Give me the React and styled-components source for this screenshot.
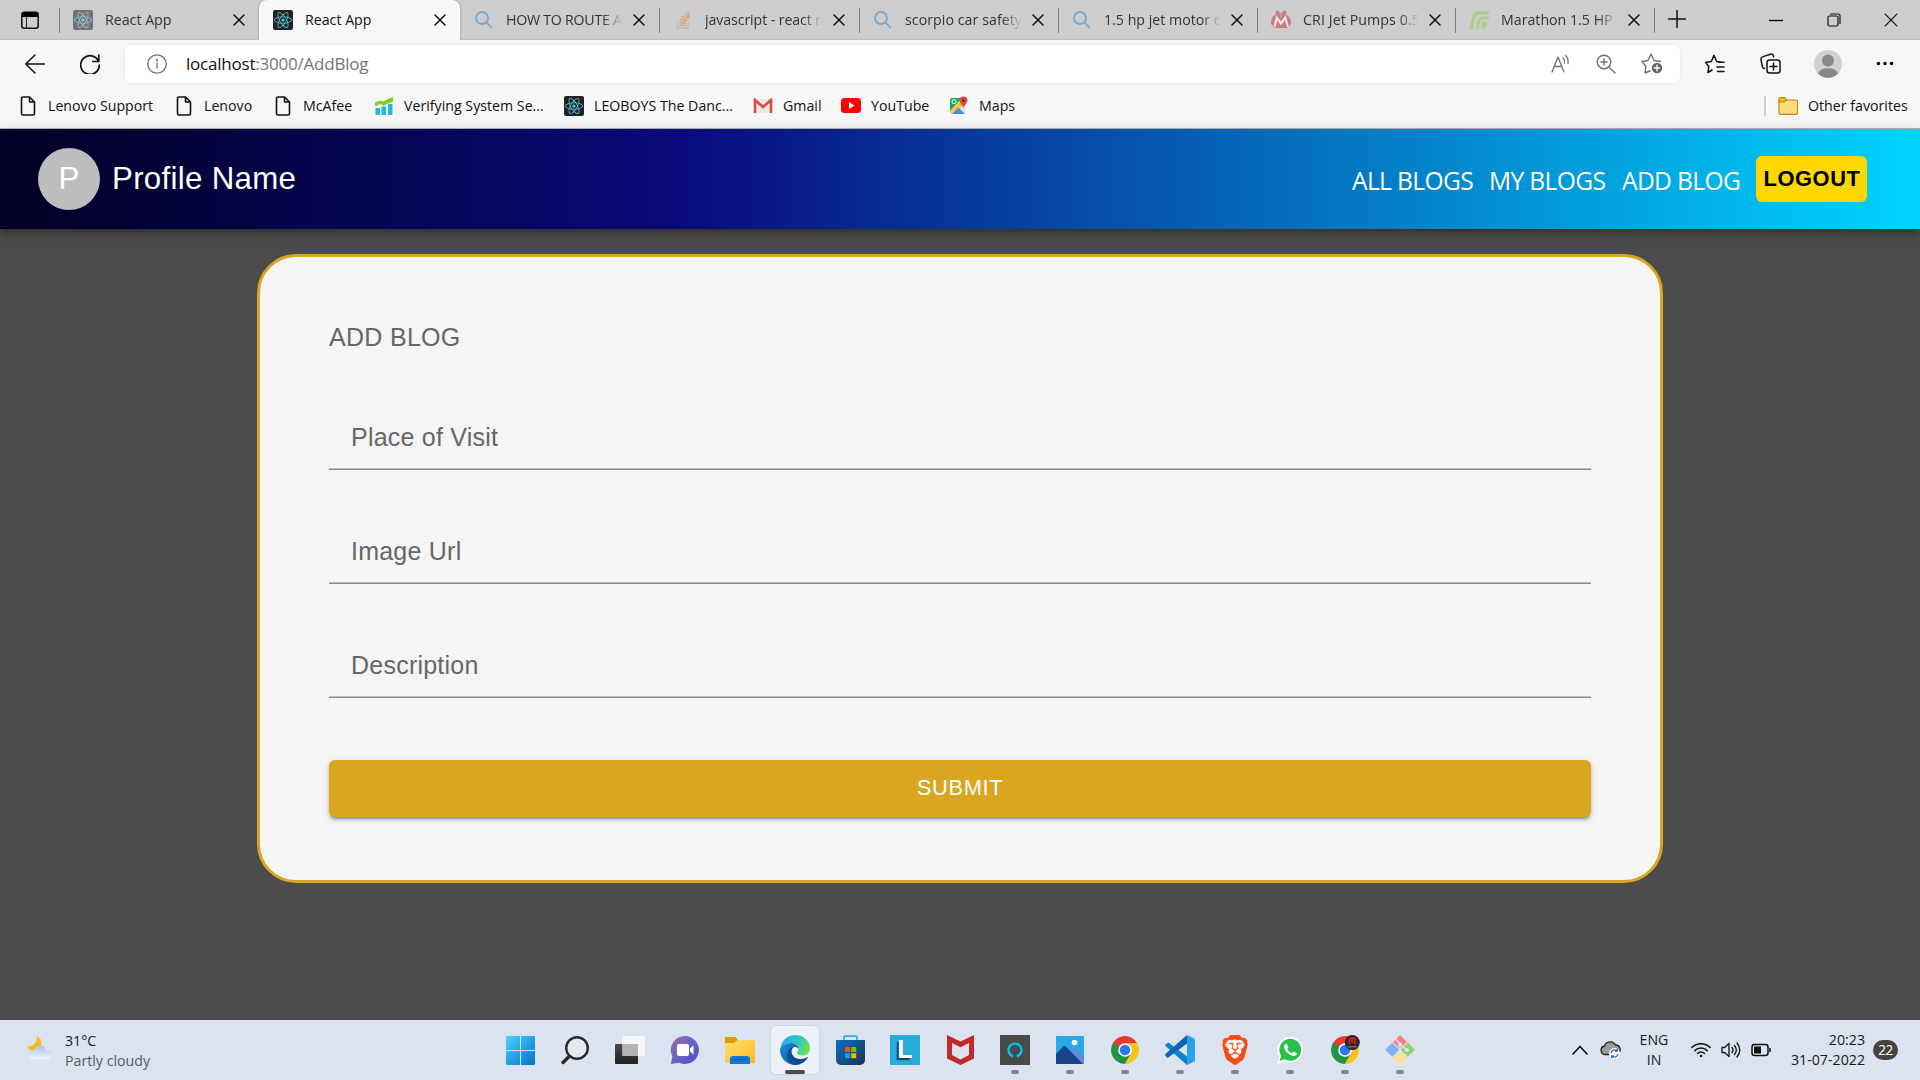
import React from "react";
import styled, { createGlobalStyle } from "styled-components";
import { FaReact } from "react-icons/fa";
import { SiBrave } from "react-icons/si";

const UI = `"Open Sans", "Noto Sans", sans-serif`;
const ARIAL = `"Liberation Sans", Arial, sans-serif`;

const Global = createGlobalStyle`
  * { box-sizing: border-box; }
  body { margin: 0; overflow: hidden; background: #4c4c4c; font-family: ${UI}; }
  svg { display: block; flex: none; }
`;

const Screen = styled.div`
  width: 1920px;
  height: 1080px;
  display: flex;
  flex-direction: column;
`;

/* ---------- browser chrome ---------- */
const TabStrip = styled.div`
  height: 40px;
  flex: none;
  display: flex;
  background: #cdcdcd;
  box-shadow: inset 0 -1px 0 #bdbdbd;
`;
const TabActions = styled.div`
  width: 59px;
  padding: 11px 0 0 21px;
`;
const Tab = styled.div`
  width: ${(p) => p.$w}px;
  height: 40px;
  display: flex;
  align-items: center;
  padding: 0 14px 0 14px;
  background: ${(p) => (p.$active ? "#f7f7f7" : "transparent")};
  border-radius: 8px 8px 0 0;
  box-shadow: ${(p) => (p.$active ? "0 0 3px rgba(0,0,0,.28)" : "none")};
`;
const Divider = styled.div`
  width: 1px;
  height: 25px;
  margin: 8px -1px 0 0;
  background: #7d7d7d;
`;
const Favicon = styled.div`
  width: 20px;
  height: 20px;
  margin-right: 12px;
  display: flex;
  align-items: center;
  opacity: ${(p) => (p.$dim ? 0.52 : 1)};
`;
const TabTitle = styled.div`
  flex: 1;
  min-width: 0;
  white-space: nowrap;
  font-size: 14.2px;
  letter-spacing: ${(p) => p.$ls || 0}px;
  line-height: 20px;
  color: ${(p) => (p.$active ? "#111" : "#333")};
  ${(p) => p.$fade && "mask-image: linear-gradient(90deg, #000 82%, transparent 99%);"}
  margin-right: 9px;
`;
const ReactTile = styled.div`
  width: 20px;
  height: 20px;
  border-radius: 2px;
  background: #222;
  color: #58c4dc;
  display: flex;
  align-items: center;
  justify-content: center;
  font-size: 18px;
`;
const NewTab = styled.div`
  padding: 10px 0 0 14px;
  flex: 1;
`;
const WindowButtons = styled.div`
  display: flex;
  align-items: center;
  gap: 43.5px;
  padding-right: 22px;
`;
const Toolbar = styled.div`
  height: 47px;
  flex: none;
  display: flex;
  align-items: center;
  background: #f7f7f7;
  padding-left: 25px;
`;
const ToolButton = styled.div`
  width: ${(p) => p.$w || 20}px;
  margin-right: ${(p) => p.$mr || 0}px;
  display: flex;
  align-items: center;
  justify-content: center;
`;
const AddressBar = styled.div`
  width: 1555px;
  height: 38px;
  display: flex;
  align-items: center;
  padding: 0 17px 0 22px;
  background: #fff;
  border-radius: 6px;
  box-shadow: 0 0 4px rgba(0, 0, 0, 0.08);
`;
const Url = styled.div`
  flex: 1;
  margin-left: 19px;
  font-size: 17px;
  letter-spacing: -0.22px;
  color: #757575;
  b { font-weight: 400; color: #111; }
`;
const Bookmarks = styled.div`
  height: 42px;
  flex: none;
  display: flex;
  align-items: center;
  background: #f7f7f7;
  border-bottom: 1px solid #b5b5b5;
  padding: 0 14px 4px 18px;
`;
const Bookmark = styled.div`
  width: ${(p) => p.$w}px;
  display: flex;
  align-items: center;
  white-space: nowrap;
  font-size: 14.2px;
  color: #111;
`;
const BookmarkIcon = styled.div`
  width: 20px;
  margin-right: 10px;
  display: flex;
  justify-content: center;
`;
const BookmarkRule = styled.div`
  width: 2px;
  height: 20px;
  margin: 0 12px 0 auto;
  background: #d0d0d0;
`;

/* ---------- page ---------- */
const Header = styled.header`
  height: 100px;
  flex: none;
  display: flex;
  align-items: center;
  justify-content: space-between;
  padding: 0 53px 0 38px;
  background: linear-gradient(90deg, rgb(2, 0, 36) 0%, rgb(9, 9, 121) 35%, rgb(0, 212, 255) 100%);
  box-shadow: 0 3px 6px -1.5px rgba(0, 0, 0, 0.2), 0 6px 8px rgba(0, 0, 0, 0.14), 0 1.5px 16px rgba(0, 0, 0, 0.12);
  position: relative;
`;
const Profile = styled.div`
  display: flex;
  align-items: center;
  color: #fff;
  font: 31.25px/50px ${ARIAL};
`;
const Avatar = styled.div`
  width: 62px;
  height: 62px;
  border-radius: 50%;
  background: #bdbdbd;
  display: flex;
  align-items: center;
  justify-content: center;
  line-height: 1;
`;
const ProfileName = styled.div`
  margin-left: 12px;
  letter-spacing: 0.3px;
`;
const Nav = styled.nav`
  display: flex;
  align-items: center;
  color: #fff;
  font-size: 24.6px;
`;
const NavLink = styled.div`
  width: ${(p) => p.$w}px;
  letter-spacing: -0.65px;
  white-space: nowrap;
  line-height: 34px;
  padding-top: 3px;
`;
const Logout = styled.button`
  width: 111px;
  height: 46px;
  border: 0;
  border-radius: 6px;
  background: #ffd700;
  color: #000;
  font: bold 21.875px/38px ${ARIAL};
  letter-spacing: 0.55px;
  padding: 0 0 1px 1px;
`;
const Main = styled.main`
  flex: 1;
  background: #4c4c4c;
  padding-top: 25px;
  display: flex;
  justify-content: center;
  align-items: flex-start;
`;
const Card = styled.section`
  width: 1406px;
  height: 629px;
  border: 3px solid #daa520;
  border-radius: 39px;
  background: #f5f5f5;
  padding: 61px 69px 0;
  font-family: ${ARIAL};
`;
const Title = styled.div`
  font-size: 25px;
  line-height: 38px;
  letter-spacing: 0.3px;
  color: #666;
  margin-bottom: 38px;
`;
const Field = styled.div`
  height: 76px;
  margin-bottom: 38px;
  padding: 25px 0 0 22px;
  border-bottom: 1px solid #8a8a8a;
  box-shadow: inset 0 -1px 0 #bbb;
  font-size: 25px;
  line-height: 36px;
  letter-spacing: 0.23px;
  color: #666;
`;
const Submit = styled.button`
  display: block;
  width: 1262px;
  height: 57px;
  margin-top: 62px;
  border: 0;
  border-radius: 6px;
  background: #daa520;
  color: #fff;
  font: 21.875px ${ARIAL};
  letter-spacing: 0.62px;
  padding: 0 6px 1px;
  box-shadow: 0 4px 2px -3px rgba(0, 0, 0, 0.25), 0 3px 3px rgba(0, 0, 0, 0.2), 0 2px 8px rgba(0, 0, 0, 0.12);
`;

/* ---------- taskbar ---------- */
const Taskbar = styled.footer`
  height: 60px;
  flex: none;
  display: flex;
  justify-content: space-between;
  background: #dae3ef;
  color: #1b1b1b;
  font-size: 14.2px;
  line-height: 20px;
`;
const Weather = styled.div`
  width: 493px;
  display: flex;
  align-items: center;
  gap: 12px;
  padding: 1px 0 0 26px;
  svg { margin-bottom: 6px; }
`;
const Small = styled.div`
  color: ${(p) => (p.$muted ? "#555b62" : "#1b1b1b")};
  text-align: ${(p) => p.$align || "left"};
  white-space: nowrap;
`;
const Apps = styled.div`
  display: flex;
  gap: 7px;
  padding: 6px 0 0 3px;
`;
const TaskButton = styled.div`
  width: 48px;
  height: 48px;
  border-radius: 5px;
  display: grid;
  grid-template-rows: 44px 4px;
  justify-items: center;
  align-items: center;
  background: ${(p) => (p.$on ? "#edf1f8" : "transparent")};
  box-shadow: ${(p) => (p.$on ? "0 0 1px 1px rgba(160,170,190,.25)" : "none")};
`;
const IconSlot = styled.div`
  height: 30px;
  margin-top: 4px;
  display: flex;
  align-items: center;
`;
const Mark = styled.div`
  width: ${(p) => (p.$on ? 20 : 8)}px;
  height: 4px;
  border-radius: 2px;
  background: ${(p) => (p.$on ? "#4a4a4a" : "#80868f")};
`;
const Tray = styled.div`
  flex: 1;
  display: flex;
  align-items: center;
  justify-content: flex-end;
  padding-right: 22px;
`;
const TraySlot = styled.div`
  width: ${(p) => p.$w}px;
  margin-right: ${(p) => p.$mr || 0}px;
`;
const Badge = styled.div`
  width: 25px;
  height: 20px;
  border-radius: 10px;
  background: #45443f;
  color: #fff;
  font-size: 13.6px;
  letter-spacing: -0.4px;
  text-align: center;
`;
const BraveMark = styled.div`
  width: 26px;
  height: 30px;
  display: flex;
  align-items: center;
  justify-content: center;
  color: #fb4a12;
  font-size: 30px;
  background: radial-gradient(ellipse 9px 11px at 50% 48%, #fff 96%, transparent);
`;
const LTile = styled.div`
  width: 30px;
  height: 30px;
  background: #27acd9;
  color: #fff;
  font: bold 25px/28px ${ARIAL};
  text-align: center;
  text-shadow: -2px 2px 1px #123d73;
`;

const line = { fill: "none", stroke: "#111", strokeWidth: 1.5, strokeLinecap: "round", strokeLinejoin: "round" };
const grey = { ...line, stroke: "#707070" };

const ReactIcon = () => <ReactTile><FaReact /></ReactTile>;
const Cross = ({ s = 12, w = 1.5 }) => (
  <svg width={s} height={s} viewBox="0 0 12 12" {...line} strokeWidth={w}><path d="M1 1 11 11M11 1 1 11" /></svg>
);
const SearchFav = () => (
  <svg width="20" height="20" viewBox="0 0 20 20" fill="none" stroke="#2a87dd" strokeWidth="1.8" strokeLinecap="round">
    <circle cx="8" cy="8" r="6" /><path d="m12.3 12.3 5 5" />
  </svg>
);
const StackFav = () => (
  <svg width="20" height="20" viewBox="0 0 20 20" fill="none">
    <path d="M4 13v5h11v-5" stroke="#aaa" strokeWidth="1.5" />
    <path d="M6 15.3h7M6.2 12.4l7 .8M7 9.3l6.6 2M8.8 6l5.8 3.800M11.700 3.200l4 5.400M14.700 1.400l1.500 6" stroke="#f48024" strokeWidth="1.600" />
  </svg>
);
const CriFav = () => (
  <svg width="20" height="20" viewBox="0 0 20 20">
    <path d="M10 3c6 0 10 4.500 10 9.500 0 2.500-2 4.500-4 5.500H4c-2-1-4-3-4-5.500C0 7.500 4 3 10 3z" fill="#c8323a" />
    <circle cx="6.500" cy="2.300" r="1.900" fill="#c8323a" /><circle cx="13.500" cy="2.300" r="1.900" fill="#c8323a" />
    <path d="m3.500 17 2.200-9.500 4.300 6 4.300-6L17 17" fill="none" stroke="#fff" strokeWidth="2.200" />
    <path d="M10 7.500v-4" stroke="#e9b0b0" />
  </svg>
);
const MarathonFav = () => (
  <svg width="20" height="20" viewBox="0 0 20 20">
    <path d="M.5 19 3 7c.8-4 3-6 7-6h10v3.500H10.500C8 4.500 6.800 5.500 6.200 8L4 19zM6.500 19l2-8c.8-3 2.500-4.500 5-4.500H20V9.500h-6c-1.600 0-2.400.8-2.800 2.500L9.500 19zM12.500 19v-3c0-3 1.500-4.500 4-4.500H18V14c0 3-1.500 5-5.500 5z" fill="#8fcf58" />
  </svg>
);
const PageIcon = () => (
  <svg width="16" height="20" viewBox="0 0 16 20" {...line} strokeWidth="1.6">
    <path d="M3 1h6.500l5 5v11.500a1.500 1.500 0 0 1-1.500 1.500H3a1.500 1.500 0 0 1-1.500-1.500v-15A1.500 1.500 0 0 1 3 1zM9.500 1v5h5" />
  </svg>
);
const ChartIcon = () => (
  <svg width="20" height="18" viewBox="0 0 20 18">
    <path d="M1.500 11h4.500v7H1.500zM7.500 9.500H12V18H7.500zM14 7h4.500v11H14z" fill="#22b7de" />
    <path d="M1 5.500 6 3.500l3 1L16 1l3-1v4.500L9.500 8.500 6 7 1 9.500z" fill="#7ed321" />
  </svg>
);
const GmailIcon = () => (
  <svg width="20" height="16" viewBox="0 0 20 16">
    <path d="M1 1h18v14H1z" fill="#e9e9e9" />
    <path d="M2 15V2l8 7 8-7v13" fill="none" stroke="#dc4b3e" strokeWidth="2.600" />
  </svg>
);
const YoutubeIcon = () => (
  <svg width="20" height="15" viewBox="0 0 20 15"><rect width="20" height="15" rx="3.500" fill="#f00" /><path d="m8 4 5.500 3.500L8 11z" fill="#fff" /></svg>
);
const MapsIcon = () => (
  <svg width="20" height="20" viewBox="0 0 20 20">
    <rect x="1" y="2" width="16" height="16" rx="2" fill="#e5e8ea" />
    <path d="M1 4a2 2 0 0 1 2-2h10L1 15z" fill="#23a566" />
    <path d="m1 15 10-10 3 4-9 9H2z" fill="#fbc934" />
    <path d="m3 18 6.500-6.500L16 18z" fill="#4a89f3" />
    <circle cx="5" cy="5.700" r="2" fill="none" stroke="#fff" />
    <path d="M14.500.5a4 4 0 0 1 4 4c0 3-3.300 4-4 8-.7-4-4-5-4-8a4 4 0 0 1 4-4z" fill="#dd4b3e" />
    <circle cx="14.500" cy="4.500" r="1.500" fill="#7a261f" />
  </svg>
);
const FolderFav = () => (
  <svg width="20" height="18" viewBox="0 0 20 18" stroke="#b98a12" strokeWidth="1.200">
    <path d="M1 3h17a1.500 1.500 0 0 1 1.500 1.500v11A1.500 1.500 0 0 1 18 17.300H2.500A1.500 1.500 0 0 1 1 15.500z" fill="#ffdc7c" />
    <path d="M1 4.800V2.200A1.500 1.500 0 0 1 2.500.7h4l2 1.800-2.300 2.300z" fill="#fac31d" />
  </svg>
);

const WindowsIcon = () => (
  <svg width="29" height="29" viewBox="0 0 29 29">
    <defs><linearGradient id="win" x1="0" y1="0" x2="29" y2="29" gradientUnits="userSpaceOnUse"><stop stopColor="#4fd0fd" /><stop offset="1" stopColor="#0072cf" /></linearGradient></defs>
    <path fill="url(#win)" d="M1 0h13v14H0V1a1 1 0 0 1 1-1zM15 0h13a1 1 0 0 1 1 1v13H15zM0 15h14v14H1a1 1 0 0 1-1-1zM15 15h14v13a1 1 0 0 1-1 1H15z" />
  </svg>
);
const SearchIcon = () => (
  <svg width="28" height="29" viewBox="0 0 28 29" fill="none" stroke="#2b2a29" strokeLinecap="round">
    <circle cx="16" cy="12" r="10.800" strokeWidth="2.400" fill="#e3e8ef" /><path d="m8 20.500-6 6" strokeWidth="3.200" />
  </svg>
);
const TaskViewIcon = () => (
  <svg width="30" height="28" viewBox="0 0 30 28">
    <defs><linearGradient id="tv" x1="0" y1="0" x2="0" y2="1"><stop stopColor="#4a4a48" /><stop offset="1" stopColor="#1f1f1f" /></linearGradient></defs>
    <rect y="8" width="23" height="20" rx="1" fill="url(#tv)" />
    <rect x="7.500" width="22.500" height="20" rx="1" fill="#f7f7f7" />
    <path d="M7.500 8H23v12H7.500z" fill="#b3b3b3" />
  </svg>
);
const ChatIcon = () => (
  <svg width="30" height="28" viewBox="0 0 30 28">
    <defs><linearGradient id="chat" x1="0" y1="0" x2="1" y2="1"><stop stopColor="#9c6bb0" /><stop offset=".5" stopColor="#6b62c6" /><stop offset="1" stopColor="#4d50c4" /></linearGradient></defs>
    <path d="M15 0a14 14 0 1 1-6 26.700L.8 28l1.600-7.500A14 14 0 0 1 15 0z" fill="url(#chat)" />
    <rect x="7" y="8" width="12" height="12" rx="2" fill="#fff" /><path d="m20 12.500 3.500-3v9l-3.500-3z" fill="#fff" />
  </svg>
);
const FolderIcon = () => (
  <svg width="30" height="27" viewBox="0 0 30 27">
    <defs><linearGradient id="fo" x1="0" y1="0" x2="1" y2="1"><stop stopColor="#ffdf73" /><stop offset="1" stopColor="#fcb91e" /></linearGradient></defs>
    <path d="M1 0h9.500L13 3.500V8H0V1a1 1 0 0 1 1-1z" fill="#dc9a08" />
    <path d="M0 6h9l3.500-3H29a1 1 0 0 1 1 1v22H0z" fill="url(#fo)" />
    <path d="M5 27v-5a3 3 0 0 1 3-3h14a3 3 0 0 1 3 3v5z" fill="#0f78d0" /><path d="M9 22.500h12" stroke="#0a4f91" strokeLinecap="round" />
  </svg>
);
const EdgeIcon = () => (
  <svg width="30" height="30" viewBox="0 0 30 30">
    <defs>
      <linearGradient id="eg" x1="0" y1=".2" x2="1" y2=".6"><stop stopColor="#2aaeea" /><stop offset=".55" stopColor="#2fc5c8" /><stop offset="1" stopColor="#69e34a" /></linearGradient>
      <linearGradient id="eb" x1="0" y1="0" x2="1" y2="1"><stop stopColor="#1b8ede" /><stop offset="1" stopColor="#0c59a4" /></linearGradient>
    </defs>
    <path d="M.5 13C1.500 5.500 7.500 0 15 0c9 0 15 6.500 15 13 0 5-3.500 7.500-7.500 7.500-3.500 0-6-1.200-5.500-2.500.4-.9 1.500-1.700 1.500-4C18.500 10.500 15.500 8 11 8 6 8 2 10.500.5 13z" fill="url(#eg)" />
    <path d="M11 8c4.500 0 7.500 2.500 7.500 6-1-1.500-2.500-2-4-2-3 0-6 3.200-6 7.500 0 5 3.500 9.500 8.500 10.300A15 15 0 0 1 0 15C0 11 5.500 8 11 8z" fill="url(#eb)" />
    <path d="M14 12c-1.800 1-2.600 3-2.400 5 .5 4.700 4.500 7 8.900 7 2.500 0 4.700-.7 6.500-1.800.7-.4 1.100 0 .7.600A15 15 0 0 1 15.500 30C10.500 29.500 7 25 7 20c0-4.500 3.500-8 7-8z" fill="#0c4e96" />
  </svg>
);
const StoreIcon = () => (
  <svg width="29" height="30" viewBox="0 0 29 30">
    <defs><linearGradient id="st" x1="0" y1="0" x2="1" y2="1"><stop stopColor="#0f6fbe" /><stop offset="1" stopColor="#1b3358" /></linearGradient></defs>
    <path d="M8 8V2.500A1.300 1.300 0 0 1 9.300 1.200h10.400A1.300 1.300 0 0 1 21 2.500V8" fill="none" stroke="#20b5f5" strokeWidth="1.800" />
    <path d="M0 5h29v20a5 5 0 0 1-5 5H5a5 5 0 0 1-5-5z" fill="url(#st)" />
    <path d="M9 12h5v5H9z" fill="#f25022" /><path d="M15.200 12h5v5h-5z" fill="#7fba00" /><path d="M9 18.200h5v5H9z" fill="#00a4ef" /><path d="M15.200 18.200h5v5h-5z" fill="#ffb900" />
  </svg>
);
const McAfeeIcon = () => (
  <svg width="27" height="30" viewBox="0 0 27 30"><path fill="#c12a2d" d="m0 0 13.500 6.500L27 0v23.500L13.500 30 0 23.500zM5 8v12l8.500 4.500L22 20V8l-8.500 4.300z" fillRule="evenodd" /></svg>
);
const AlexaIcon = () => (
  <svg width="30" height="30" viewBox="0 0 30 30"><path d="M0 0h30v30H0z" fill="#4a4a48" /><path d="M13.300 21.300a6.500 6.500 0 1 1 3.400 0" fill="none" stroke="#05c3f2" strokeWidth="2.300" /></svg>
);
const PhotosIcon = () => (
  <svg width="28" height="28" viewBox="0 0 28 28">
    <rect width="28" height="28" rx="1" fill="#29a9e6" />
    <path d="m10 20 6.500-7a2 2 0 0 1 3 0L28 22v6H10z" fill="#6687d4" /><path d="m0 18 7-7.300a2 2 0 0 1 3 0L27 28H0z" fill="#17458c" /><circle cx="18.500" cy="6.500" r="2.800" fill="#fff" />
  </svg>
);
const ChromeIcon = ({ badge }) => (
  <svg width="30" height="30" viewBox="0 0 30 30">
    <path d="M15 15 2.900 8A14 14 0 0 1 27.100 8z" fill="#e33b2e" />
    <path d="M2.900 8A14 14 0 0 0 15 29l6.100-10.500L15 15z" fill="#229342" />
    <path d="M27.100 8A14 14 0 0 1 15 29l6-10.500A7 7 0 0 0 15 8z" fill="#fbc116" />
    <path d="M2.900 8 9 18.500 9.500 12 15 8z" fill="#229342" /><path d="M2.900 8H15l-5.500 4z" fill="#e33b2e" />
    <circle cx="15" cy="15" r="6.800" fill="#fff" /><circle cx="15" cy="15" r="5.300" fill="#2b79ea" />
    {badge && <g><circle cx="22.300" cy="7.600" r="7.500" fill="#282828" /><path d="M19.500 9.500V4.500q0-1.500 1.400-1.500 1.400 0 1.400 1.500V8v-3.500q0-1.500 1.400-1.500 1.400 0 1.400 1.500v5" stroke="#e51b1b" strokeWidth="1.700" fill="none" /><path d="M17.500 11.800h9.500" stroke="#aaa" strokeWidth=".8" /></g>}
  </svg>
);
const CodeIcon = () => (
  <svg width="30" height="30" viewBox="0 0 30 30">
    <path d="m1 9 2.500-1.500L22 21.500V30L.8 11.300C0 10.500 0 9.800 1 9z" fill="#0b83ca" />
    <path d="M1 21.500.3 20.500c-.4-.7-.2-1.300.4-1.800L22 0v8.500L3.300 22.500c-1 .5-1.700 0-2.300-1z" fill="#0868ad" />
    <path d="m22 0 7 3.200a1.800 1.800 0 0 1 1 1.600v20.400a1.800 1.800 0 0 1-1 1.600L22 30z" fill="#29a2ee" />
  </svg>
);
const GitIcon = () => (
  <svg width="30" height="30" viewBox="0 0 30 30">
    <path d="m15 0 7 7-7 7-7-7z" fill="#ff7d80" /><path d="m7.200 7.700 7 7-7 7-7-7z" fill="#7fb0ff" /><path d="m22.800 7.700 7 7-7 7-7-7z" fill="#8fd06a" /><path d="m15 15.500 7 7-7 7-7-7z" fill="#ffe07a" />
    <path d="m10 3.500 5 5v13M15 8.500l7 7" stroke="#dae3ef" strokeWidth="1.600" fill="none" /><circle cx="15" cy="21.500" r="2" fill="#dae3ef" /><circle cx="22" cy="15" r="2" fill="#dae3ef" /><circle cx="15" cy="9.500" r="2" fill="#dae3ef" />
  </svg>
);
const BraveIcon = () => <BraveMark><SiBrave /></BraveMark>;
const WhatsIcon = () => (
  <svg width="26" height="27" viewBox="0 0 26 27">
    <path d="M13.300 0a12.800 12.800 0 1 1-6 24.200L0 27l2.200-7.400A12.800 12.800 0 0 1 13.300 0z" fill="#fff" />
    <path d="M13.300 1.800a11 11 0 1 1-5.600 20.500L2.600 24l1.600-5.200A11 11 0 0 1 13.300 1.800z" fill="#28c04a" />
    <path d="M9.400 6.700c-.7-.3-2.300.8-2.300 2.800 0 4.300 5.700 9.500 9.600 9.500 1.900 0 3.300-1.300 3.100-2.800l-3.300-1.700-1.700 1.800c-2.100-.8-3.700-2.300-4.500-4.200l1.200-1.700z" fill="#fff" />
  </svg>
);

const tabs = [
  { w: 200, icon: <ReactIcon />, title: "React App" },
  { w: 201, icon: <ReactIcon />, title: "React App", active: true },
  { w: 199, icon: <SearchFav />, title: "HOW TO ROUTE A", fade: true, ls: -0.25 },
  { w: 200, icon: <StackFav />, title: "javascript - react n", fade: true, ls: -0.1 },
  { w: 199, icon: <SearchFav />, title: "scorpio car safety", fade: true, ls: 0.05 },
  { w: 199, icon: <SearchFav />, title: "1.5 hp jet motor c", fade: true },
  { w: 198, icon: <CriFav />, title: "CRI Jet Pumps 0.5", fade: true, ls: 0.1 },
  { w: 199, icon: <MarathonFav />, title: "Marathon 1.5 HP", fade: true },
];
const bookmarks = [
  { w: 156, icon: <PageIcon />, text: "Lenovo Support" },
  { w: 99, icon: <PageIcon />, text: "Lenovo" },
  { w: 101, icon: <PageIcon />, text: "McAfee" },
  { w: 190, icon: <ChartIcon />, text: "Verifying System Se..." },
  { w: 189, icon: <ReactIcon />, text: "LEOBOYS The Danc..." },
  { w: 88, icon: <GmailIcon />, text: "Gmail" },
  { w: 108, icon: <YoutubeIcon />, text: "YouTube" },
  { w: 80, icon: <MapsIcon />, text: "Maps" },
];
const apps = [
  [WindowsIcon], [SearchIcon], [TaskViewIcon], [ChatIcon], [FolderIcon], [EdgeIcon, "on"], [StoreIcon],
  [() => <LTile>L</LTile>], [McAfeeIcon], [AlexaIcon, "run"], [PhotosIcon, "run"], [ChromeIcon, "run"], [CodeIcon, "run"],
  [BraveIcon, "run"], [WhatsIcon, "run"], [() => <ChromeIcon badge />, "run"], [GitIcon, "run"],
];

export default function App() {
  return (
    <Screen>
      <Global />
      <TabStrip>
        <TabActions>
          <svg width="18" height="18" viewBox="0 0 18 18"><rect x=".8" y="1.300" width="16.400" height="15.900" rx="2.500" {...line} /><path d="M1 3.500A2.500 2.500 0 0 1 3.500 1h11A2.500 2.500 0 0 1 17 3.500V6H1z" fill="#000" /><path d="M5.500 6v11" stroke="#222" /></svg>
        </TabActions>
        {tabs.map((t, i) => (
          <React.Fragment key={i}>
            {i !== 1 && i !== 2 && <Divider />}
            <Tab $w={t.w} $active={t.active}>
              <Favicon $dim={!t.active}>{t.icon}</Favicon>
              <TabTitle $active={t.active} $fade={t.fade} $ls={t.ls}>{t.title}</TabTitle>
              <Cross />
            </Tab>
          </React.Fragment>
        ))}
        <Divider />
        <NewTab><svg width="18" height="18" viewBox="0 0 18 18" {...line}><path d="M9 .5v17M.5 9h17" /></svg></NewTab>
        <WindowButtons>
          <svg width="14" height="14" viewBox="0 0 14 14"><path d="M0 7.500h14" stroke="#000" strokeWidth="1.300" /></svg>
          <svg width="14" height="14" viewBox="0 0 14 14" {...line} strokeWidth="1.200"><rect x="1" y="3" width="10" height="10" rx="1.500" /><path d="M3.500 1H11a2 2 0 0 1 2 2v7.500" /></svg>
          <Cross s={14} w={1.1} />
        </WindowButtons>
      </TabStrip>
      <Toolbar>
        <ToolButton $mr={35}><svg width="20" height="20" viewBox="0 0 20 20" {...line}><path d="M19.500 10H.8M10 1 .8 10l9.200 9" /></svg></ToolButton>
        <ToolButton $mr={25}><svg width="20" height="20" viewBox="0 0 20 20" {...line} strokeWidth="1.700"><path d="M18.600 7.500A9.300 9.300 0 1 0 19.300 11M18.800 1v6.500h-6" /></svg></ToolButton>
        <AddressBar>
          <svg width="20" height="20" viewBox="0 0 20 20" {...grey} strokeWidth="1.300"><circle cx="10" cy="10" r="9.200" /><path d="M10 9v5" /><circle cx="10" cy="6" r=".5" fill="#666" /></svg>
          <Url><b>localhost</b>:3000/AddBlog</Url>
          <ToolButton $mr={25}><svg width="20" height="20" viewBox="0 0 20 20" {...grey} strokeWidth="1.300"><path d="m1 18 6-15 6 15M3 12.500h8M12 4q2 2.200 1.500 5M14.500 1.500q3.200 3 2.500 8" /></svg></ToolButton>
          <ToolButton $mr={25}><svg width="20" height="20" viewBox="0 0 20 20" {...grey} strokeWidth="1.400"><circle cx="8" cy="8" r="6.800" /><path d="m13 13 6 6M8 5v6M5 8h6" /></svg></ToolButton>
          <ToolButton $w={22}><svg width="22" height="21" viewBox="0 0 22 21" {...grey} strokeWidth="1.400"><path d="m9 18-5 2 .9-6.500L1 8.500l6-1L10 1l3 6.500 6.500 1" /><circle cx="16" cy="15" r="5.200" fill="#666" stroke="none" /><path d="M16 12.300v5.400M13.300 15h5.400" stroke="#fff" /></svg></ToolButton>
        </AddressBar>
        <ToolButton $w={70}><svg width="20" height="20" viewBox="0 0 20 20" {...line}><path d="m7 16-4 2.500.8-6L.5 8.500l5.800-1L9 1.200l2.700 6.300 4 .6M13.500 8.200H19M12 13h7M12.500 17.500H19" /></svg></ToolButton>
        <ToolButton $w={40}><svg width="21" height="21" viewBox="0 0 21 21" {...line}><rect x="7" y="7" width="13" height="13" rx="2.500" /><path d="M13.500 10v7M10 13.500h7M4.500 15.500c-1 0-1.700-.6-2-1.500L1 6.500C.8 5 1.500 4 3 3.600L10.500 1.200C12 .8 13 1.300 13.500 3v1" /></svg></ToolButton>
        <ToolButton $w={76}><svg width="28" height="28" viewBox="0 0 28 28"><circle cx="14" cy="14" r="14" fill="#d2d0ce" /><circle cx="14" cy="10.500" r="6" fill="#8a8886" /><path d="M4 23.500a10.300 7 0 0 1 20 0A14 14 0 0 1 4 23.500z" fill="#8a8886" /></svg></ToolButton>
        <ToolButton $w={38}><svg width="18" height="5" viewBox="0 0 18 5"><circle cx="2.500" cy="2.500" r="1.700" /><circle cx="9" cy="2.500" r="1.700" /><circle cx="15.500" cy="2.500" r="1.700" /></svg></ToolButton>
      </Toolbar>
      <Bookmarks>
        {bookmarks.map((b) => (
          <Bookmark key={b.text} $w={b.w}><BookmarkIcon>{b.icon}</BookmarkIcon>{b.text}</Bookmark>
        ))}
        <BookmarkRule />
        <Bookmark $w={128}><BookmarkIcon><FolderFav /></BookmarkIcon>Other favorites</Bookmark>
      </Bookmarks>

      <Header>
        <Profile><Avatar>P</Avatar><ProfileName>Profile Name</ProfileName></Profile>
        <Nav>
          <NavLink $w={137}>ALL BLOGS</NavLink>
          <NavLink $w={133}>MY BLOGS</NavLink>
          <NavLink $w={134}>ADD BLOG</NavLink>
          <Logout>LOGOUT</Logout>
        </Nav>
      </Header>
      <Main>
        <Card>
          <Title>ADD BLOG</Title>
          <Field>Place of Visit</Field>
          <Field>Image Url</Field>
          <Field>Description</Field>
          <Submit>SUBMIT</Submit>
        </Card>
      </Main>

      <Taskbar>
        <Weather>
          <svg width="27" height="24" viewBox="0 0 27 24">
            <defs><linearGradient id="cl" x1="0" y1="0" x2="0" y2="1"><stop stopColor="#a9c2ea" /><stop offset="1" stopColor="#f1f6fc" /></linearGradient></defs>
            <path d="M10.500 0c4 1.500 6 5 4.500 9.500-1.500 4-6.500 7-11 4.500-1.500-.8-2.500-2-3.200-3.500C6.500 11 12 7 10.500 0z" fill="#fdb813" />
            <path d="M8 23.500a4.700 4.700 0 0 1 0-9.500c1-3 3.500-4.500 6-4.500 3 0 5.500 2 6.200 5A4.500 4.500 0 0 1 22 23.500z" fill="url(#cl)" />
          </svg>
          <div><Small>31°C</Small><Small $muted>Partly cloudy</Small></div>
        </Weather>
        <Apps>
          {apps.map(([Icon, state], i) => (
            <TaskButton key={i} $on={state === "on"}>
              <IconSlot><Icon /></IconSlot>
              {state && <Mark $on={state === "on"} />}
            </TaskButton>
          ))}
        </Apps>
        <Tray>
          <TraySlot $w={16} $mr={12}><svg width="16" height="10" viewBox="0 0 16 10" {...line} strokeWidth="1.700"><path d="M1 9 8 1.500 15 9" /></svg></TraySlot>
          <TraySlot $w={21} $mr={17}>
            <svg width="21" height="18" viewBox="0 0 21 18"><path d="M5 13.500a4.300 4.300 0 0 1-.5-8.500A6 6 0 0 1 15.500 4a4.500 4.500 0 0 1 3.500 7.500l-2 2z" fill="#9b9b9b" stroke="#222" strokeWidth="1.300" /><circle cx="14.500" cy="12.500" r="5.500" fill="#fff" /><path d="M11 12a3.600 3.600 0 0 1 6-2.200M18 13a3.600 3.600 0 0 1-6 2.200M17.300 8v2.200H15M11.700 17v-2.200H14" fill="none" stroke="#1273cf" strokeWidth="1.300" /></svg>
          </TraySlot>
          <TraySlot $w={32} $mr={21}><Small $align="center">ENG</Small><Small $align="center">IN</Small></TraySlot>
          <TraySlot $w={20} $mr={10}><svg width="20" height="16" viewBox="0 0 20 16" {...line} strokeWidth="1.500"><path d="M.8 5.500a13 13 0 0 1 18.400 0M3.800 8.600a8.800 8.800 0 0 1 12.400 0M6.600 11.500a4.800 4.800 0 0 1 6.800 0" /><circle cx="10" cy="14" r="1.300" fill="#111" stroke="none" /></svg></TraySlot>
          <TraySlot $w={20} $mr={10}><svg width="20" height="16" viewBox="0 0 20 16" {...line} strokeWidth="1.300"><path d="M1 5.500h2.500L8 1.500v13l-4.500-4H1zM11 5.500q2 2.500 0 5M13.500 3.500q3.700 4.500 0 9M16 1q5.500 7 0 14" /></svg></TraySlot>
          <TraySlot $w={20} $mr={14}><svg width="20" height="14" viewBox="0 0 20 14" {...line}><rect x="1" y="1.500" width="16" height="11" rx="2.500" /><path d="M19 5.500v3" /><path d="M3 3.500h7v7H3z" fill="#111" stroke="none" /></svg></TraySlot>
          <TraySlot $w={80} $mr={8}><Small $align="right">20:23</Small><Small $align="right">31-07-2022</Small></TraySlot>
          <Badge>22</Badge>
        </Tray>
      </Taskbar>
    </Screen>
  );
}
